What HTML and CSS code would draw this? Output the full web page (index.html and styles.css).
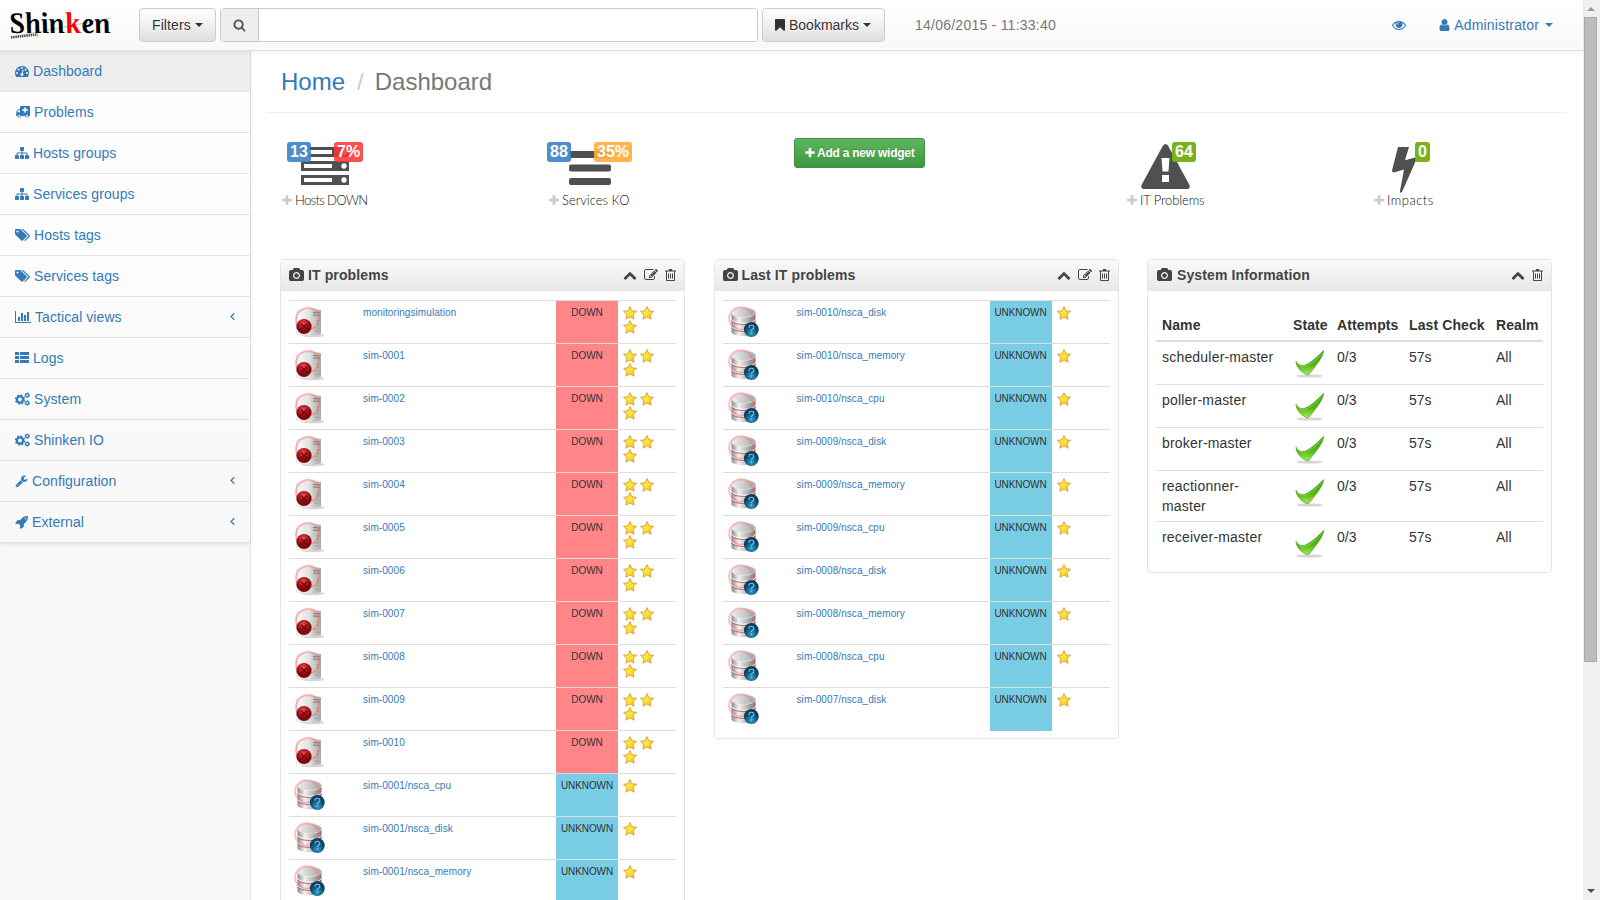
FILE: index.html
```html
<!DOCTYPE html>
<html lang="en">
<head>
<meta charset="utf-8">
<title>Shinken Dashboard</title>
<link rel="stylesheet" href="styles.css">
</head>
<body>
<svg class="defs" width="0" height="0" aria-hidden="true">
<defs>
<linearGradient id="g-box" x1="0" x2="1"><stop offset="0" stop-color="#fafafa"/><stop offset="1" stop-color="#dededc"/></linearGradient>
<linearGradient id="g-side" x1="0" x2="1"><stop offset="0" stop-color="#d6d6d4"/><stop offset="1" stop-color="#a9a9a7"/></linearGradient>
<linearGradient id="g-cyl" x1="0" x2="1"><stop offset="0" stop-color="#8a8a8a"/><stop offset=".3" stop-color="#f2f2f2"/><stop offset=".65" stop-color="#b5b5b5"/><stop offset="1" stop-color="#777"/></linearGradient>
<linearGradient id="g-top" x1="0" x2="1"><stop offset="0" stop-color="#efefef"/><stop offset="1" stop-color="#a8a8a8"/></linearGradient>
<radialGradient id="g-red" cx=".45" cy=".3"><stop offset="0" stop-color="#e0575c"/><stop offset=".6" stop-color="#b3131a"/><stop offset="1" stop-color="#7c070c"/></radialGradient>
<radialGradient id="g-blue" cx=".5" cy=".75"><stop offset="0" stop-color="#3ba4cf"/><stop offset=".6" stop-color="#12668f"/><stop offset="1" stop-color="#0b4163"/></radialGradient>
<linearGradient id="g-star" x1="0" y1="0" x2="1" y2="1"><stop offset="0" stop-color="#fff04a"/><stop offset=".5" stop-color="#fde23c"/><stop offset="1" stop-color="#fbc01c"/></linearGradient>
<linearGradient id="g-check" x1="0" y1="0" x2="0" y2="1"><stop offset="0" stop-color="#3f9c10"/><stop offset=".6" stop-color="#55b812"/><stop offset="1" stop-color="#a5ee63"/></linearGradient>
<symbol id="search" viewBox="0 0 1792 1792"><path d="M1216 832q0-185-131.500-316.500t-316.500-131.500-316.500 131.500-131.500 316.500 131.500 316.500 316.500 131.500 316.500-131.500 131.500-316.500zm512 832q0 52-38 90t-90 38q-54 0-90-38l-343-342q-179 124-399 124-143 0-273.500-55.500t-225-150-150-225-55.500-273.500 55.500-273.500 150-225 225-150 273.500-55.500 273.500 55.500 225 150 150 225 55.500 273.500q0 220-124 399l343 343q37 37 37 90z"/></symbol>
<symbol id="tach" viewBox="0 0 1792 1792"><path d="M384 1152q0-53-37.500-90.500t-90.500-37.500-90.500 37.500-37.500 90.500 37.500 90.500 90.500 37.500 90.500-37.500 37.500-90.500zm192-448q0-53-37.500-90.500t-90.500-37.500-90.500 37.500-37.500 90.500 37.500 90.500 90.500 37.500 90.500-37.500 37.500-90.500zm428 481l101-382q6-26-7.500-48.500t-38.500-29.500-48 6.500-30 39.500l-101 382q-60 5-107 43.500t-63 98.500q-20 77 20 146t117 89 146-20 89-117q16-60-6-117t-72-91zm660-33q0-53-37.500-90.500t-90.500-37.500-90.500 37.500-37.500 90.500 37.500 90.500 90.500 37.500 90.500-37.500 37.500-90.500zm-640-640q0-53-37.500-90.500t-90.500-37.500-90.500 37.500-37.500 90.500 37.500 90.500 90.500 37.500 90.500-37.500 37.500-90.500zm448 192q0-53-37.500-90.500t-90.500-37.500-90.500 37.500-37.500 90.500 37.500 90.500 90.500 37.500 90.500-37.500 37.500-90.500zm320 448q0 261-141 483-19 29-54 29h-1402q-35 0-54-29-141-221-141-483 0-182 71-348t191-286 286-191 348-71 348 71 286 191 191 286 71 348z"/></symbol>
<symbol id="amb" viewBox="0 0 15 14"><path fill-rule="evenodd" d="M6 1h8.500q.5 0 .5.500v9q0 .500-.5.500h-.6a2 2 0 0 1-3.900 0H6.400a2 2 0 0 1-3.900 0H1.200V6.500L3.700 4H5V1.500Q5 1 6 1zM9.200 2.500v1.600H7.600v1.800h1.600v1.600h1.800V5.900h1.600V4.100H11V2.500zM4 5L2.200 6.800V7.200H5V5zM4.450 9.700a1 1 0 1 0 .01 0zM11.950 9.700a1 1 0 1 0 .01 0z"/></symbol>
<symbol id="sitemap" viewBox="0 0 1792 1792"><path d="M1792 1248v320q0 40-28 68t-68 28h-320q-40 0-68-28t-28-68v-320q0-40 28-68t68-28h96v-192h-512v192h96q40 0 68 28t28 68v320q0 40-28 68t-68 28h-320q-40 0-68-28t-28-68v-320q0-40 28-68t68-28h96v-192h-512v192h96q40 0 68 28t28 68v320q0 40-28 68t-68 28h-320q-40 0-68-28t-28-68v-320q0-40 28-68t68-28h96v-192q0-52 38-90t90-38h512v-192h-96q-40 0-68-28t-28-68v-320q0-40 28-68t68-28h320q40 0 68 28t28 68v320q0 40-28 68t-68 28h-96v192h512q52 0 90 38t38 90v192h96q40 0 68 28t28 68z"/></symbol>
<symbol id="tags" viewBox="0 0 1920 1792"><path d="M448 448q0-53-37.500-90.500t-90.500-37.500-90.500 37.500-37.500 90.500 37.500 90.500 90.500 37.500 90.500-37.500 37.500-90.500zm1067 576q0 53-37 90l-491 492q-39 37-91 37-53 0-90-37l-715-716q-38-37-64.500-101t-26.500-117v-416q0-52 38-90t90-38h416q53 0 117 26.500t102 64.500l715 714q37 39 37 91zm384 0q0 53-37 90l-491 492q-39 37-91 37-36 0-59-14t-53-45l470-470q37-37 37-90 0-52-37-91l-715-714q-38-38-102-64.500t-117-26.500h224q53 0 117 26.500t102 64.500l715 714q37 39 37 91z"/></symbol>
<symbol id="bars" viewBox="0 0 16 14"><path d="M0 1h1v11h15v1H0zM3 7h2v4H3zM6 3h2v8H6zM9 5h2v6H9zM12 2h2v9h-2z"/></symbol>
<symbol id="thlist" viewBox="0 0 14 14"><path d="M0 1h4v3H0zM5 1h9v3H5zM0 5h4v3H0zM5 5h9v3H5zM0 9h4v3H0zM5 9h9v3H5z"/></symbol>
<symbol id="cogs" viewBox="0 0 15 14"><g fill="none" stroke="currentColor"><circle cx="5" cy="7.500" r="3.100" stroke-width="2.300"/><circle cx="5" cy="7.500" r="4.500" stroke-width="1.400" stroke-dasharray="1.767"/><circle cx="12.200" cy="3.200" r="1.600" stroke-width="1.300"/><circle cx="12.200" cy="3.200" r="2.400" stroke-width=".8" stroke-dasharray="1.257"/><circle cx="12.200" cy="11" r="1.600" stroke-width="1.300"/><circle cx="12.200" cy="11" r="2.400" stroke-width=".8" stroke-dasharray="1.257"/></g></symbol>
<symbol id="wrench" viewBox="0 0 1792 1792"><path d="M448 1472q0-26-19-45t-45-19-45 19-19 45 19 45 45 19 45-19 19-45zm644-420l-682 682q-37 37-90 37-52 0-91-37l-106-108q-38-36-38-90 0-53 38-91l681-681q39 98 114.500 173.500t173.500 114.500zm634-435q0 39-23 106-47 134-164.500 217.500t-258.500 83.500q-185 0-316.500-131.500t-131.500-316.500 131.500-316.500 316.500-131.500q58 0 121.500 16.500t107.500 46.500q16 11 16 28t-16 28l-293 169v224l193 107q5-3 79-48.500t135.500-81 70.500-35.500q15 0 23.500 10t8.500 25z"/></symbol>
<symbol id="rocket" viewBox="0 0 1664 1792"><path d="M1440 448q0-40-28-68t-68-28-68 28-28 68 28 68 68 28 68-28 28-68zm224-288q0 249-75.500 430.500t-253.500 360.500q-81 80-195 176l-20 379q-2 16-16 26l-384 224q-7 4-16 4-12 0-23-9l-64-64q-13-14-8-32l85-276-281-281-276 85q-3 1-9 1-14 0-23-9l-64-64q-17-19-5-39l224-384q10-14 26-16l379-20q96-114 176-195 188-187 358-258t431-71q14 0 24 9.500t10 22.500z"/></symbol>
<symbol id="eye" viewBox="0 0 1792 1792"><path d="M1664 960q-152-236-381-353 61 104 61 225 0 185-131.500 316.500t-316.500 131.500-316.500-131.500-131.500-316.500q0-121 61-225-229 117-381 353 133 205 333.500 326.500t434.500 121.500 434.500-121.500 333.500-326.500zm-720-384q0-20-14-34t-34-14q-125 0-214.500 89.500t-89.500 214.500q0 20 14 34t34 14 34-14 14-34q0-86 61-147t147-61q20 0 34-14t14-34zm848 384q0 34-20 69-140 230-376.500 368.500t-499.500 138.500-499.500-139-376.500-368q-20-35-20-69t20-69q140-229 376.500-368t499.500-139 499.500 139 376.500 368q20 35 20 69z"/></symbol>
<symbol id="user" viewBox="256 0 1280 1792"><path d="M1536 1399q0 109-62.500 187t-150.500 78h-854q-88 0-150.500-78t-62.500-187q0-85 8.500-160.500t31.500-152 58.500-131 94-89 134.500-34.500q131 128 313 128t313-128q76 0 134.500 34.500t94 89 58.500 131 31.500 152 8.500 160.500zm-256-887q0 159-112.500 271.500t-271.500 112.500-271.500-112.500-112.500-271.500 112.500-271.500 271.500-112.500 271.500 112.500 112.500 271.500z"/></symbol>
<symbol id="bookmark" viewBox="256 0 1280 1792"><path d="M1420 128q23 0 44 9 33 13 52.500 41t19.500 62v1289q0 34-19.500 62t-52.500 41q-19 8-44 8-48 0-83-32l-441-424-441 424q-36 33-83 33-23 0-44-9-33-13-52.500-41t-19.500-62v-1289q0-34 19.500-62t52.500-41q21-9 44-9h1048z"/></symbol>
<symbol id="camera" viewBox="-64 0 1920 1792"><path d="M896 672q119 0 203.500 84.500t84.500 203.500-84.500 203.500-203.500 84.500-203.500-84.500-84.500-203.500 84.500-203.500 203.500-84.500zm704-416q106 0 181 75t75 181v896q0 106-75 181t-181 75h-1408q-106 0-181-75t-75-181v-896q0-106 75-181t181-75h224l51-136q19-49 69.500-84.500t103.500-35.500h512q53 0 103.500 35.500t69.500 84.500l51 136h224zm-704 1152q185 0 316.500-131.500t131.500-316.500-131.500-316.500-316.500-131.500-316.500 131.500-131.500 316.500 131.500 316.500 316.500 131.500z"/></symbol>
<symbol id="up" viewBox="0 0 1792 1792"><path d="M1683 1331l-166 165q-19 19-45 19t-45-19l-531-531-531 531q-19 19-45 19t-45-19l-166-165q-19-19-19-45.500t19-45.500l742-741q19-19 45-19t45 19l742 741q19 19 19 45.500t-19 45.500z"/></symbol>
<symbol id="edit" viewBox="0 0 1792 1792"><path d="M888 1184l116-116-152-152-116 116v56h96v96h56zm440-720q-16-16-33 1l-350 350q-17 17-1 33t33-1l350-350q17-17 1-33zm80 594v190q0 119-84.500 203.500t-203.500 84.500h-832q-119 0-203.500-84.500t-84.500-203.500v-832q0-119 84.500-203.500t203.500-84.500h832q63 0 117 25 15 7 18 23 3 17-9 29l-49 49q-14 14-32 8-23-6-45-6h-832q-66 0-113 47t-47 113v832q0 66 47 113t113 47h832q66 0 113-47t47-113v-126q0-13 9-22l64-64q15-15 35-7t20 29zm-96-738l288 288-672 672h-288v-288zm444 132l-92 92-288-288 92-92q28-28 68-28t68 28l152 152q28 28 28 68t-28 68z"/></symbol>
<symbol id="trash" viewBox="0 0 11 14"><path fill-rule="evenodd" d="M3.500 2.500L4.200 1h2.600l.7 1.500H11v1h-1V12q0 1-1 1H2q-1 0-1-1V3.500H0v-1zM2 3.500V12h7V3.500zM3 5.500h1v5H3zM5 5.500h1v5H5zM7 5.500h1v5H7z"/></symbol>
<symbol id="plus" viewBox="192 0 1408 1792"><path d="M1600 736v192q0 40-28 68t-68 28h-416v416q0 40-28 68t-68 28h-192q-40 0-68-28t-28-68v-416h-416q-40 0-68-28t-28-68v-192q0-40 28-68t68-28h416v-416q0-40 28-68t68-28h192q40 0 68 28t28 68v416h416q40 0 68 28t28 68z"/></symbol>
<symbol id="left" viewBox="0 0 5 14"><path d="M4.300 3.300L1 6.500l3.300 3.200" fill="none" stroke="currentColor" stroke-width="1.200"/></symbol>
<symbol id="host" viewBox="0 0 32 32"><ellipse cx="19" cy="29.500" rx="11.500" ry="1.800" fill="#bbb" opacity=".6"/><path d="M2.500 5L17 2.500v28L2.500 28z" fill="url(#g-box)" stroke="#d5d5d5" stroke-width=".5"/><path d="M17 2.500l10 1.600v24L17 30.500z" fill="url(#g-side)"/><path d="M19 6.500l7 .5M19 9l7 .4" stroke="#777" stroke-width="1"/><path d="M20 22h5M20 25h5" stroke="#999" stroke-width=".8"/><path d="M23 15h2M23 18h2" stroke="#5d9b3c" stroke-width="1.200"/><path d="M3 19C-1 8 8 1 16 2c8 1 11 9 8 15-1 3-4 5-7 6" fill="none" stroke="#f9777c" stroke-width="2.400" opacity=".28"/><path d="M3 19C-1 8 8 1 16 2c8 1 11 9 8 15-1 3-4 5-7 6" fill="none" stroke="#f5686c" stroke-width=".8" opacity=".6"/><circle cx="10" cy="20.500" r="7.600" fill="url(#g-red)"/><path d="M7.200 17.800l5.700 5.400m0-5.400l-5.700 5.400" stroke="#6b070b" stroke-width="1.400"/></symbol>
<symbol id="service" viewBox="0 0 32 32"><path d="M3.500 6v20c0 5.500 24 5.500 24 0V6z" fill="url(#g-cyl)"/><path d="M3.500 13.500c2 5 22 5 24 0M3.500 20.500c2 5 22 5 24 0" fill="none" stroke="#fff" stroke-width="1"/><path d="M3.500 14.700c2 5 22 5 24 0M3.500 21.700c2 5 22 5 24 0" fill="none" stroke="#b8474b" stroke-width=".8"/><ellipse cx="15.500" cy="6.500" rx="12" ry="5" fill="url(#g-top)" stroke="#eee" stroke-width=".6"/><ellipse cx="13" cy="12.500" rx="12" ry="11.300" fill="none" stroke="#f9777c" stroke-width="2.400" opacity=".25"/><ellipse cx="13" cy="12.500" rx="12" ry="11.300" fill="none" stroke="#f26a6e" stroke-width=".7" opacity=".55"/><circle cx="23.300" cy="23.500" r="7.400" fill="url(#g-blue)"/><path d="M20.900 21.700c0-3.300 5-3.100 5-.3 0 1.800-2.500 1.600-2.500 3.700m0 1.200v1.500" fill="none" stroke="#7dbdd8" stroke-width="1.200"/></symbol>
<symbol id="star" viewBox="0 0 14 14"><path d="M7 .6l1.900 4.200 4.600.5-3.400 3.200 1 4.700L7 10.900l-4.100 2.300 1-4.700L.5 5.300l4.600-.5z" fill="url(#g-star)" stroke="#d49d2c" stroke-width=".9" stroke-linejoin="round"/></symbol>
<symbol id="check" viewBox="0 0 30 28"><ellipse cx="14.500" cy="26" rx="13" ry="1.600" fill="#bbb" opacity=".6"/><path d="M1 11c1.500 4 6 5.500 9.500 4C17 12 22 7 28.700.5 28 7 22 14 18.500 18.500c-1.500 2-3.500 4.500-5.500 6.500C6.500 23 1 17 1 11z" fill="url(#g-check)" stroke="#3d9411" stroke-width=".6"/><path d="M1.500 11.500c2 4 6 5.800 9.500 4.500 6-2.500 12-8 17-13.500" fill="none" stroke="#9be95e" stroke-width=".7"/></symbol>
</defs>
</svg>
<div class="window">
<div class="app">
<header class="navbar">
<svg class="logo" width="102" height="28" viewBox="0 0 102 28"><path d="M2 26L101 7" stroke="#b5b5b5" stroke-width=".8"/><path d="M1 26.500L27 23.500" stroke="#555" stroke-width="2.600" stroke-dasharray="1.500 .7"/><path d="M27 22l1 4" stroke="#e8c531" stroke-width="1.500"/><g class="logo-text" transform="translate(0 22) skewX(11)"><text x="1" y="0" textLength="55" lengthAdjust="spacingAndGlyphs">Shin</text><text class="logo-k" x="57" y="0" textLength="15" lengthAdjust="spacingAndGlyphs">k</text><text x="73" y="0" textLength="29" lengthAdjust="spacingAndGlyphs">en</text></g></svg>
<button class="btn filters">Filters<i class="caret"></i></button>
<div class="search"><span class="addon"><svg class="ic w13"><use href="#search"/></svg></span><input type="text" aria-label="Search"></div>
<button class="btn bookmarks"><svg class="ic w10"><use href="#bookmark"/></svg>Bookmarks<i class="caret"></i></button>
<span class="clock">14/06/2015 - 11:33:40</span>
<a class="view"><svg class="ic w14"><use href="#eye"/></svg></a>
<a class="account"><svg class="ic w11"><use href="#user"/></svg>Administrator<i class="caret"></i></a>
</header>
<div class="body">
<aside class="sidebar"><nav>
<a class="active"><svg class="ic w14"><use href="#tach"/></svg>Dashboard</a>
<a><svg class="ic w15"><use href="#amb"/></svg>Problems</a>
<a><svg class="ic w14"><use href="#sitemap"/></svg>Hosts groups</a>
<a><svg class="ic w14"><use href="#sitemap"/></svg>Services groups</a>
<a><svg class="ic w15"><use href="#tags"/></svg>Hosts tags</a>
<a><svg class="ic w15"><use href="#tags"/></svg>Services tags</a>
<a><svg class="ic w16"><use href="#bars"/></svg>Tactical views<svg class="ic arrow"><use href="#left"/></svg></a>
<a><svg class="ic w14"><use href="#thlist"/></svg>Logs</a>
<a><svg class="ic w15"><use href="#cogs"/></svg>System</a>
<a><svg class="ic w15"><use href="#cogs"/></svg>Shinken IO</a>
<a><svg class="ic w13"><use href="#wrench"/></svg>Configuration<svg class="ic arrow"><use href="#left"/></svg></a>
<a><svg class="ic w13"><use href="#rocket"/></svg>External<svg class="ic arrow"><use href="#left"/></svg></a>
</nav></aside>
<main>
<h1 class="crumbs"><a>Home</a><span class="sep">/</span><span>Dashboard</span></h1>
<section class="stats">
<div class="stat hosts"><svg class="pic" width="48" height="38" viewBox="0 0 48 38"><path fill="#4f5052" d="M0 0h48v10H0zM0 14h48v10H0zM0 28h48v10H0z"/><path fill="#fff" d="M3 3h28v4H3zM3 17h28v4H3zM3 31h28v4H3z"/><g fill="#fff"><circle cx="43" cy="5" r="2.700"/><circle cx="43" cy="19" r="2.700"/><circle cx="43" cy="33" r="2.700"/></g></svg><b class="badge blue">13</b><b class="badge red">7%</b><p><svg class="ic w10"><use href="#plus"/></svg><span>Hosts DOWN</span></p></div>
<div class="stat services"><svg class="pic" width="42" height="34" viewBox="0 0 42 34"><g fill="#4f5052"><rect width="42" height="7" rx="2"/><rect y="13.500" width="42" height="7" rx="2"/><rect y="27" width="42" height="7" rx="2"/></g></svg><b class="badge blue">88</b><b class="badge orange">35%</b><p><svg class="ic w10"><use href="#plus"/></svg><span>Services KO</span></p></div>
<div><button class="add"><svg class="ic w10"><use href="#plus"/></svg><span>Add a new widget</span></button></div>
<div class="stat problems"><svg class="pic" width="49" height="45" viewBox="0 0 49 45"><path fill="#4f5052" fill-rule="evenodd" d="M22 1.500q2.500-3 5 0L48.500 41q1 4-2 4h-44q-3 0-2-4zM20.500 14l1 13.500h6L28.500 14zM21 31v7h7v-7z"/></svg><b class="badge green">64</b><p><svg class="ic w10"><use href="#plus"/></svg><span>IT Problems</span></p></div>
<div class="stat impacts"><svg class="pic" width="25" height="46" viewBox="0 0 25 45" preserveAspectRatio="none"><path fill="#4f5052" d="M6 0h11l-4 13 11-3Q25 10 24.500 12L10 44q-2 2-2-1l4-21-10 3Q0 25 0 23z"/></svg><b class="badge green">0</b><p><svg class="ic w10"><use href="#plus"/></svg><span>Impacts</span></p></div>
</section>
<section class="panels">
<article class="panel"><h2><svg class="ic w15"><use href="#camera"/></svg>IT problems<span class="tools"><svg class="ic w14"><use href="#up"/></svg><svg class="ic w14"><use href="#edit"/></svg><svg class="ic w11"><use href="#trash"/></svg></span></h2>
<table class="list">
<tr><td><svg><use href="#host"/></svg></td><td><a>monitoringsimulation</a></td><td class="down">DOWN</td><td><div class="stars"><svg><use href="#star"/></svg><svg><use href="#star"/></svg><svg><use href="#star"/></svg></div></td></tr>
<tr><td><svg><use href="#host"/></svg></td><td><a>sim-0001</a></td><td class="down">DOWN</td><td><div class="stars"><svg><use href="#star"/></svg><svg><use href="#star"/></svg><svg><use href="#star"/></svg></div></td></tr>
<tr><td><svg><use href="#host"/></svg></td><td><a>sim-0002</a></td><td class="down">DOWN</td><td><div class="stars"><svg><use href="#star"/></svg><svg><use href="#star"/></svg><svg><use href="#star"/></svg></div></td></tr>
<tr><td><svg><use href="#host"/></svg></td><td><a>sim-0003</a></td><td class="down">DOWN</td><td><div class="stars"><svg><use href="#star"/></svg><svg><use href="#star"/></svg><svg><use href="#star"/></svg></div></td></tr>
<tr><td><svg><use href="#host"/></svg></td><td><a>sim-0004</a></td><td class="down">DOWN</td><td><div class="stars"><svg><use href="#star"/></svg><svg><use href="#star"/></svg><svg><use href="#star"/></svg></div></td></tr>
<tr><td><svg><use href="#host"/></svg></td><td><a>sim-0005</a></td><td class="down">DOWN</td><td><div class="stars"><svg><use href="#star"/></svg><svg><use href="#star"/></svg><svg><use href="#star"/></svg></div></td></tr>
<tr><td><svg><use href="#host"/></svg></td><td><a>sim-0006</a></td><td class="down">DOWN</td><td><div class="stars"><svg><use href="#star"/></svg><svg><use href="#star"/></svg><svg><use href="#star"/></svg></div></td></tr>
<tr><td><svg><use href="#host"/></svg></td><td><a>sim-0007</a></td><td class="down">DOWN</td><td><div class="stars"><svg><use href="#star"/></svg><svg><use href="#star"/></svg><svg><use href="#star"/></svg></div></td></tr>
<tr><td><svg><use href="#host"/></svg></td><td><a>sim-0008</a></td><td class="down">DOWN</td><td><div class="stars"><svg><use href="#star"/></svg><svg><use href="#star"/></svg><svg><use href="#star"/></svg></div></td></tr>
<tr><td><svg><use href="#host"/></svg></td><td><a>sim-0009</a></td><td class="down">DOWN</td><td><div class="stars"><svg><use href="#star"/></svg><svg><use href="#star"/></svg><svg><use href="#star"/></svg></div></td></tr>
<tr><td><svg><use href="#host"/></svg></td><td><a>sim-0010</a></td><td class="down">DOWN</td><td><div class="stars"><svg><use href="#star"/></svg><svg><use href="#star"/></svg><svg><use href="#star"/></svg></div></td></tr>
<tr><td><svg><use href="#service"/></svg></td><td><a>sim-0001/nsca_cpu</a></td><td class="unknown">UNKNOWN</td><td><div class="stars"><svg><use href="#star"/></svg></div></td></tr>
<tr><td><svg><use href="#service"/></svg></td><td><a>sim-0001/nsca_disk</a></td><td class="unknown">UNKNOWN</td><td><div class="stars"><svg><use href="#star"/></svg></div></td></tr>
<tr><td><svg><use href="#service"/></svg></td><td><a>sim-0001/nsca_memory</a></td><td class="unknown">UNKNOWN</td><td><div class="stars"><svg><use href="#star"/></svg></div></td></tr>
</table></article>
<article class="panel"><h2><svg class="ic w15"><use href="#camera"/></svg>Last IT problems<span class="tools"><svg class="ic w14"><use href="#up"/></svg><svg class="ic w14"><use href="#edit"/></svg><svg class="ic w11"><use href="#trash"/></svg></span></h2>
<table class="list">
<tr><td><svg><use href="#service"/></svg></td><td><a>sim-0010/nsca_disk</a></td><td class="unknown">UNKNOWN</td><td><div class="stars"><svg><use href="#star"/></svg></div></td></tr>
<tr><td><svg><use href="#service"/></svg></td><td><a>sim-0010/nsca_memory</a></td><td class="unknown">UNKNOWN</td><td><div class="stars"><svg><use href="#star"/></svg></div></td></tr>
<tr><td><svg><use href="#service"/></svg></td><td><a>sim-0010/nsca_cpu</a></td><td class="unknown">UNKNOWN</td><td><div class="stars"><svg><use href="#star"/></svg></div></td></tr>
<tr><td><svg><use href="#service"/></svg></td><td><a>sim-0009/nsca_disk</a></td><td class="unknown">UNKNOWN</td><td><div class="stars"><svg><use href="#star"/></svg></div></td></tr>
<tr><td><svg><use href="#service"/></svg></td><td><a>sim-0009/nsca_memory</a></td><td class="unknown">UNKNOWN</td><td><div class="stars"><svg><use href="#star"/></svg></div></td></tr>
<tr><td><svg><use href="#service"/></svg></td><td><a>sim-0009/nsca_cpu</a></td><td class="unknown">UNKNOWN</td><td><div class="stars"><svg><use href="#star"/></svg></div></td></tr>
<tr><td><svg><use href="#service"/></svg></td><td><a>sim-0008/nsca_disk</a></td><td class="unknown">UNKNOWN</td><td><div class="stars"><svg><use href="#star"/></svg></div></td></tr>
<tr><td><svg><use href="#service"/></svg></td><td><a>sim-0008/nsca_memory</a></td><td class="unknown">UNKNOWN</td><td><div class="stars"><svg><use href="#star"/></svg></div></td></tr>
<tr><td><svg><use href="#service"/></svg></td><td><a>sim-0008/nsca_cpu</a></td><td class="unknown">UNKNOWN</td><td><div class="stars"><svg><use href="#star"/></svg></div></td></tr>
<tr><td><svg><use href="#service"/></svg></td><td><a>sim-0007/nsca_disk</a></td><td class="unknown">UNKNOWN</td><td><div class="stars"><svg><use href="#star"/></svg></div></td></tr>
</table></article>
<article class="panel system"><h2><svg class="ic w15"><use href="#camera"/></svg>System Information<span class="tools"><svg class="ic w14"><use href="#up"/></svg><svg class="ic w11"><use href="#trash"/></svg></span></h2>
<table class="info">
<tr><th>Name</th><th>State</th><th>Attempts</th><th>Last Check</th><th>Realm</th></tr>
<tr><td>scheduler-master</td><td><svg><use href="#check"/></svg></td><td>0/3</td><td>57s</td><td>All</td></tr>
<tr><td>poller-master</td><td><svg><use href="#check"/></svg></td><td>0/3</td><td>57s</td><td>All</td></tr>
<tr><td>broker-master</td><td><svg><use href="#check"/></svg></td><td>0/3</td><td>57s</td><td>All</td></tr>
<tr><td>reactionner-<br>master</td><td><svg><use href="#check"/></svg></td><td>0/3</td><td>57s</td><td>All</td></tr>
<tr><td>receiver-master</td><td><svg><use href="#check"/></svg></td><td>0/3</td><td>57s</td><td>All</td></tr>
</table></article>
</section>
</main>
</div>
</div>
<div class="scrollbar"><i class="tri-up"></i><div class="thumb"></div><i class="tri-down"></i></div>
</div>
</body>
</html>
```
FILE: styles.css
```css
* { box-sizing: border-box; }
body { margin: 0; height: 900px; overflow: hidden; background: #fff; color: #333; font: 14px/20px "Liberation Sans", Arial, sans-serif; }
a { color: #337ab7; text-decoration: none; }
.defs { position: absolute; }
.ic { height: 14px; fill: currentColor; flex: none; display: block; }
.w10 { width: 10px; } .w11 { width: 11px; } .w13 { width: 13px; } .w14 { width: 14px; } .w15 { width: 15px; } .w16 { width: 16px; }
.window { display: flex; height: 900px; }
.app { width: 1583px; display: flex; flex-direction: column; }

.navbar { height: 51px; flex: none; display: flex; align-items: center; padding-bottom: 1px; border-bottom: 1px solid #e1e1e1; background: linear-gradient(#fff, #f8f8f8); box-shadow: 0 1px 4px rgba(0,0,0,.07); z-index: 1; }
.logo { margin: 0 27px 0 10px; overflow: visible; }
.logo-text { font: italic bold 30px "Liberation Serif", serif; fill: #000; }
.logo-k { fill: #f00; }
.btn { height: 34px; border: 1px solid #ccc; border-radius: 4px; background: linear-gradient(#fff, #e0e0e0); color: #333; font: inherit; padding: 0 12px; display: flex; align-items: center; text-shadow: 0 1px 0 #fff; }
.filters { width: 77px; letter-spacing: .1px; }
.bookmarks { width: 123px; margin-left: 4px; }
.bookmarks .ic { margin-right: 4px; }
.caret { border: 4px solid transparent; border-top-color: currentColor; border-bottom: 0; margin-left: 4px; }
.search { display: flex; width: 538px; height: 34px; margin-left: 4px; border: 1px solid #ccc; border-radius: 4px; overflow: hidden; background: #fff; }
.addon { width: 38px; background: #eee; border-right: 1px solid #ccc; display: flex; align-items: center; justify-content: center; color: #555; }
.search input { flex: 1; border: 0; padding: 0; }
.clock { color: #777; margin-left: 30px; letter-spacing: .24px; }
.view { margin-left: auto; }
.account { display: flex; align-items: center; margin: 0 30px 0 33px; letter-spacing: .18px; }
.account .ic { margin-right: 4px; }
.account .caret { margin-left: 6px; }

.body { display: flex; flex: 1; min-height: 0; }
.sidebar { width: 251px; flex: none; background: #f8f8f8; border-right: 1px solid #e3e3e3; }
.sidebar nav { background: linear-gradient(#fff, #f8f8f8); box-shadow: 0 1px 4px rgba(0,0,0,.1); letter-spacing: .08px; }
.sidebar a { display: flex; align-items: center; gap: 4px; height: 41px; padding: 0 15px 0 15px; border-bottom: 1px solid #e3e3e3; }
.sidebar .active { background: #ededed; }
.arrow { width: 5px; margin-left: auto; }

main { flex: 1; padding-left: 15px; min-width: 0; overflow: hidden; }
.crumbs { margin: 0 16px 0 0; height: 62px; padding: 17px 0 0 15px; border-bottom: 1px solid #eee; font-size: 24px; line-height: 28px; font-weight: 400; color: #777; display: flex; }
.sep { color: #ccc; margin: 0 11px 0 12px; }
.stats { display: grid; grid-template-columns: 268px 245px 333px 247px 80px; height: 146px; padding: 25px 0 0 15px; }
.stat { position: relative; }
.stat p { position: absolute; left: 0; top: 52px; margin: 0; display: flex; align-items: center; gap: 3px; white-space: nowrap; font: 300 13px/20px Lato, sans-serif; color: #111; }
.stat p .ic { color: #ccc; height: 13px; }
.hosts p { letter-spacing: -.65px; left: 1px; gap: 3px; }
.problems p { letter-spacing: -.12px; }
.impacts p { letter-spacing: .5px; }
.pic, .badge { position: absolute; }
.hosts .pic { left: 20px; top: 9px; }
.services .pic { left: 20px; top: 13px; }
.problems .pic { left: 14px; top: 6px; }
.impacts .pic { left: 18px; top: 9px; }
.badge { top: 4px; height: 20px; padding: 0 3px; border-radius: 3px; font-size: 16px; line-height: 19px; color: #fff; }
.blue { left: 6px; background: rgba(66,132,199,.93); }
.services .blue { left: -2px; }
.red { left: 53px; background: rgba(255,50,54,.87); }
.orange { left: 45px; background: rgba(255,173,57,.9); }
.green { left: 45px; background: #79b31b; }
.impacts .green { left: 41px; }
.add { width: 131px; height: 30px; margin: 0; padding: 0 10px; border: 1px solid #3e8f3e; border-radius: 3px; background: linear-gradient(#5cb85c, #419641); color: #fff; font: bold 12px/18px "Liberation Sans", Arial, sans-serif; display: flex; align-items: center; gap: 2px; text-shadow: 0 -1px 0 rgba(0,0,0,.2); white-space: nowrap; letter-spacing: -.24px; }
.add .ic { height: 12px; }

.panels { display: grid; grid-template-columns: repeat(3, 405px); column-gap: 28.500px; align-items: start; padding-left: 14px; }
.panel { border: 1px solid #e6e6e6; border-radius: 4px; overflow: hidden; padding-bottom: 7px; }
.panel h2 { height: 31px; margin: 0 0 9px; padding: 0 8px 2px; display: flex; align-items: center; gap: 4px; font-size: 14px; letter-spacing: .12px; color: #444; background: linear-gradient(#fafafa, #e7e7e7); }
.tools { margin-left: auto; display: flex; gap: 7px; }
table { border-collapse: collapse; table-layout: fixed; }
.list { width: 387px; margin-left: 8px; font-size: 10px; line-height: 14px; letter-spacing: .08px; }
.list td { height: 43px; padding: 5px; vertical-align: top; border-top: 1px solid #ddd; }
.list td:nth-child(1) { width: 69px; }
.list td:nth-child(2) { width: 198px; }
.list td:nth-child(3) { width: 62px; padding: 5px 0; text-align: center; letter-spacing: -.1px; }
.list td:nth-child(4) { padding-bottom: 0; padding-right: 0; }
.list td > svg { width: 32px; height: 32px; display: block; }
.down { background: #ff8589; }
.unknown { background: #78cce3; }
.stars { display: flex; flex-wrap: wrap; column-gap: 3px; width: 33px; height: 28px; align-content: flex-start; }
.stars svg { width: 14px; height: 14px; }
.info { width: 387px; margin: 19px 0 1px 8px; }
.info th, .info td { padding: 5px 5px 5px 6px; text-align: left; vertical-align: top; }
.info td:first-child { letter-spacing: .2px; }
.info th { border-bottom: 2px solid #ddd; white-space: nowrap; letter-spacing: .1px; }
.info td { border-top: 1px solid #ddd; height: 43px; }
.info th:nth-child(1) { width: 131px; }
.info th:nth-child(2) { width: 44px; }
.info th:nth-child(3) { width: 72px; }
.info th:nth-child(4) { width: 87px; }
.info svg { width: 30px; height: 28px; display: block; margin: 3px 0 0 2px; }
.system h2 { padding-left: 9px; gap: 5px; }

.scrollbar { width: 17px; background: #f0f0f0; display: flex; flex-direction: column; align-items: center; padding-right: 2px; }
.thumb { width: 13px; height: 645px; background: #bcbcbc; border: 1px solid #a9a9a9; flex: none; }
.tri-up { border: 4px solid transparent; border-top: 0; border-bottom-color: #999; margin: 7px 0 6px; }
.tri-down { border: 4px solid transparent; border-top-color: #505050; border-bottom: 0; margin: auto 0 7px; }
```
